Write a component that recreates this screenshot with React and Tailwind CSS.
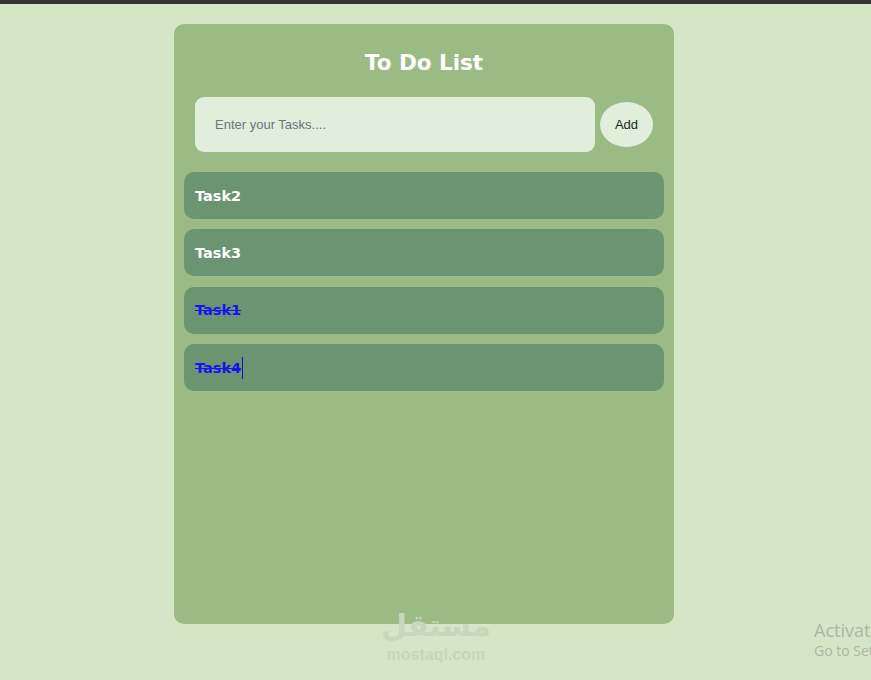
import { useState } from 'react';

const initialTasks = [
  { id: 2, text: 'Task2', done: false },
  { id: 3, text: 'Task3', done: false },
  { id: 1, text: 'Task1', done: true },
  { id: 4, text: 'Task4', done: true, caret: true },
];

function TaskItem({ task }) {
  return (
    <li className="flex items-center h-[47px] px-[11px] pt-[2px] rounded-[10px] bg-[#6b9470]">
      <span
        className={`text-[14.5px] font-bold ${task.done ? 'text-[#1515f0] line-through' : 'text-white'}`}
      >
        {task.text}
      </span>
      {task.caret && <span className="ml-px w-px h-[22px] bg-[#1010c0]" />}
    </li>
  );
}

export default function App() {
  const [tasks] = useState(initialTasks);

  return (
    <div
      className="min-h-[680px] bg-[#d4e6c6] relative overflow-hidden"
      style={{ fontFamily: '"Comic Sans MS", "DejaVu Sans", sans-serif' }}
    >
      {/* top bar */}
      <div className="h-[4px] bg-[#333333]" />

      <div className="pt-[20px] pl-[174px]">
        <div className="w-[500px] h-[600px] rounded-[10px] bg-[#9abc84] px-[10px] pt-[23px]">
          <h1 className="text-center text-white text-[21.5px] font-bold leading-[32px]">
            To Do List
          </h1>

          <div className="flex items-center mt-[18px] pl-[11px]">
            <input
              placeholder="Enter your Tasks...."
              className="w-[400px] h-[55px] rounded-[9px] bg-[#e1eedc] px-[20px] text-[13px] outline-none placeholder:text-[#6b7280]"
              style={{ fontFamily: '"Liberation Sans", Arial, sans-serif' }}
            />
            <button
              className="ml-[5px] w-[53px] h-[45px] rounded-[50%] bg-[#e1eedc] text-[13px] text-[#1f1f1f]"
              style={{ fontFamily: '"Liberation Sans", Arial, sans-serif' }}
            >
              Add
            </button>
          </div>

          <ul className="mt-[20px] flex flex-col gap-[10.3px]">
            {tasks.map((t) => (
              <TaskItem key={t.id} task={t} />
            ))}
          </ul>
        </div>
      </div>

      {/* watermark */}
      <div
        className="absolute left-[381px] top-[606px] flex flex-col items-center text-[#c6d8bc]"
        style={{ fontFamily: '"DejaVu Sans", sans-serif' }}
      >
        <span className="text-[30px] font-bold leading-[40px]">مستقل</span>
        <span
          className="text-[16px] font-bold leading-[18px]"
          style={{ fontFamily: '"Liberation Sans", sans-serif' }}
        >
          mostaql.com
        </span>
      </div>

      {/* windows activation */}
      <div
        className="absolute left-[814px] top-[619px] text-[#a9b8a2] whitespace-nowrap"
        style={{ fontFamily: '"Open Sans", sans-serif' }}
      >
        <div className="text-[18px] leading-[22px]">Activate Windows</div>
        <div className="text-[14px] leading-[20px]">Go to Settings to activate Windows.</div>
      </div>
    </div>
  );
}
